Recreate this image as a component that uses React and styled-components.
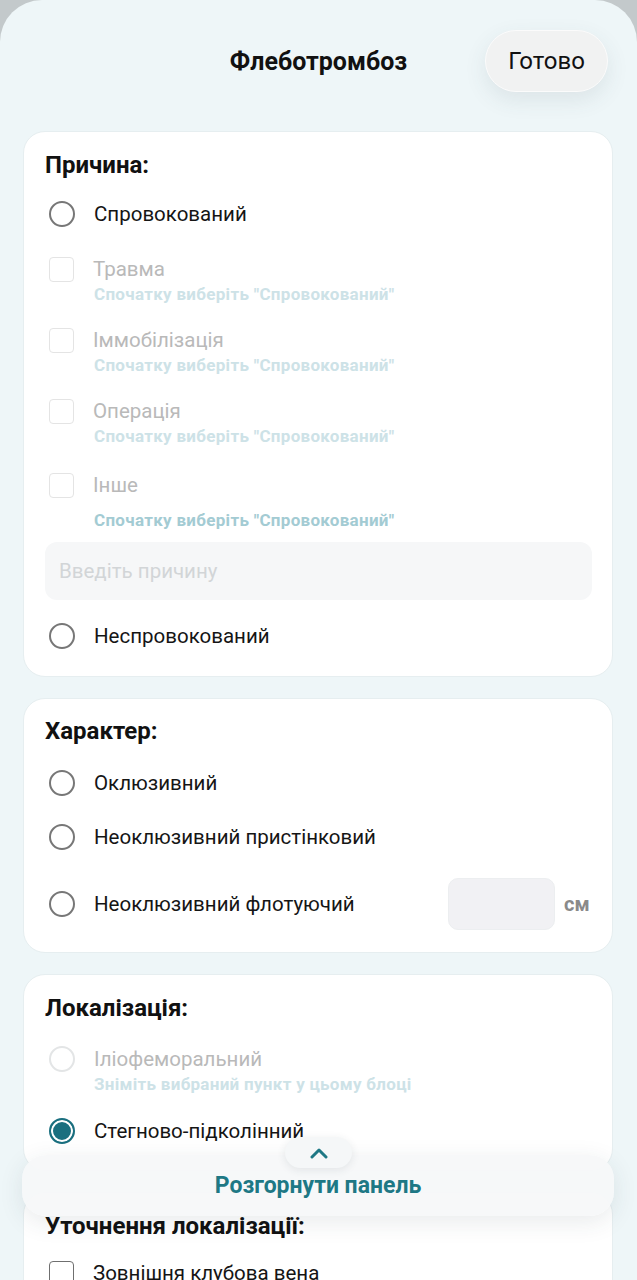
import styled, { createGlobalStyle, css } from "styled-components";

const GlobalStyle = createGlobalStyle`
  html, body {
    margin: 0;
    height: 100%;
    background: #c3c9cb;
    font-family: Roboto, "Noto Sans", sans-serif;
    -webkit-font-smoothing: antialiased;
  }
  * { box-sizing: border-box; }
`;

const Screen = styled.div`
  position: relative;
  height: 1280px;
  overflow: hidden;
`;

const Sheet = styled.div`
  height: 100%;
  background: #eef6f8;
  border-radius: 42px 42px 0 0;
`;

const Header = styled.div`
  display: grid;
  grid-template-columns: 1fr auto 1fr;
  align-items: center;
  padding: 30px 29px 0;
`;

const Title = styled.h1`
  grid-column: 2;
  margin: 0;
  font-size: 25px;
  font-weight: 700;
  color: #111;
`;

const DoneButton = styled.button`
  justify-self: end;
  width: 123px;
  height: 62px;
  border-radius: 31px;
  border: 1.5px solid #fbfbfb;
  background: #f1f2f2;
  box-shadow: 0 8px 22px rgba(60, 80, 90, 0.1);
  font-family: inherit;
  font-size: 24px;
  color: #111;
`;

const List = styled.div`
  display: flex;
  flex-direction: column;
  gap: 21px;
  padding: 39px 24px 0 23px;
`;

const Card = styled.section`
  display: flex;
  flex-direction: column;
  gap: ${(p) => p.$gap || 21}px;
  padding: ${(p) => p.$pad || "20px 20px 25px 21px"};
  background: #fff;
  border: 1px solid #e6eef0;
  border-radius: 22px;
`;

const CardTitle = styled.h2`
  margin: 0;
  font-size: 24px;
  line-height: 26px;
  font-weight: 700;
  color: #111;
`;

const Group = styled.div`
  display: flex;
  flex-direction: column;
  margin-top: ${(p) => p.$top || 0}px;
`;

const Row = styled.div`
  display: flex;
  align-items: center;
  gap: 19px;
  min-height: 30px;
  padding-left: 4px;
  margin-top: ${(p) => p.$top || 0}px;
`;

const Label = styled.span`
  flex: 1;
  font-size: 20.5px;
  color: ${(p) => (p.$disabled ? "#b9b9b9" : "#151515")};
`;

const Hint = styled.div`
  padding-left: 49px;
  margin-top: ${(p) => p.$top || 0}px;
  font-size: 17px;
  line-height: 20px;
  letter-spacing: 0.3px;
  font-weight: 700;
  color: ${(p) => (p.$strong ? "#a3cbd3" : "#cde2e7")};
`;

const markBase = css`
  flex: none;
  width: 26px;
  height: 26px;
`;

const Radio = styled.span`
  ${markBase}
  border-radius: 50%;
  border: 2px solid ${(p) => (p.$disabled ? "#e3e5e6" : "#777")};
  ${(p) =>
    p.$checked &&
    css`
      border-color: #1a6f7f;
      background: #1a6f7f;
      box-shadow: inset 0 0 0 2px #fff;
    `}
`;

const Checkbox = styled.span`
  ${markBase}
  width: 25px;
  height: 25px;
  border-radius: 4px;
  border: 1.5px solid ${(p) => (p.$disabled ? "#e4e4e4" : "#6f6f6f")};
`;

const ReasonInput = styled.div`
  display: flex;
  align-items: center;
  height: 58px;
  margin-top: -9px;
  padding-left: 14px;
  border-radius: 12px;
  background: #f6f7f8;
  font-size: 20.5px;
  color: #d2d5d7;
`;

const SizeBox = styled.div`
  width: 107px;
  height: 52px;
  border-radius: 10px;
  background: #f1f1f4;
  border: 1px solid #eceef0;
`;

const Unit = styled.span`
  width: 28px;
  font-size: 20px;
  font-weight: 700;
  color: #8a8a8a;
  margin-left: -10px;
`;

const Panel = styled.div`
  position: absolute;
  left: 22px;
  right: 23px;
  top: 1155px;
  height: 61px;
  display: flex;
  align-items: center;
  justify-content: center;
  border-radius: 24px;
  background: rgba(246, 248, 249, 0.94);
  box-shadow: 0 6px 24px rgba(40, 60, 70, 0.1);
  font-size: 23px;
  font-weight: 700;
  color: #1e7885;
`;

const PanelTab = styled.div`
  position: absolute;
  left: 285px;
  top: 1137px;
  width: 67px;
  height: 31px;
  display: flex;
  align-items: center;
  justify-content: center;
  border-radius: 16px;
  background: #f5f7f8;
  box-shadow: 0 2px 8px rgba(40, 60, 70, 0.1);
`;

const hint = 'Спочатку виберіть "Спровокований"';

const Option = ({ type = "radio", label, disabled, checked, top, children }) => (
  <Row $top={top}>
    {type === "radio" ? (
      <Radio $disabled={disabled} $checked={checked} />
    ) : (
      <Checkbox $disabled={disabled} />
    )}
    <Label $disabled={disabled}>{label}</Label>
    {children}
  </Row>
);

const App = () => {
  return (
    <Screen>
      <GlobalStyle />
      <Sheet>
        <Header>
          <Title>Флеботромбоз</Title>
          <DoneButton>Готово</DoneButton>
        </Header>
        <List>
          <Card>
            <CardTitle>Причина:</CardTitle>
            <Option label="Спровокований" />
            <Group $top={4}>
              <Option type="check" label="Травма" disabled />
              <Hint>{hint}</Hint>
            </Group>
            <Group>
              <Option type="check" label="Іммобілізація" disabled />
              <Hint>{hint}</Hint>
            </Group>
            <Group>
              <Option type="check" label="Операція" disabled />
              <Hint>{hint}</Hint>
            </Group>
            <Group $top={3}>
              <Option type="check" label="Інше" disabled />
              <Hint $top={10} $strong>
                {hint}
              </Hint>
            </Group>
            <ReasonInput>Введіть причину</ReasonInput>
            <Option label="Неспровокований" />
          </Card>

          <Card $gap={24} $pad="19px 20px 22px 21px">
            <CardTitle>Характер:</CardTitle>
            <Option label="Оклюзивний" />
            <Option label="Неоклюзивний пристінковий" />
            <Option label="Неоклюзивний флотуючий" top={2}>
              <SizeBox />
              <Unit>см</Unit>
            </Option>
          </Card>

          <Card $gap={22} $pad="20px 20px 24px 21px">
            <CardTitle>Локалізація:</CardTitle>
            <Group $top={1}>
              <Option label="Іліофеморальний" disabled />
              <Hint>Зніміть вибраний пункт у цьому блоці</Hint>
            </Group>
            <Option label="Стегново-підколінний" checked />
          </Card>

          <Card $gap={19} $pad="20px 20px 26px 21px">
            <CardTitle>Уточнення локалізації:</CardTitle>
            <Option type="check" label="Зовнішня клубова вена" />
          </Card>
        </List>
      </Sheet>

      <Panel>Розгорнути панель</Panel>
      <PanelTab>
        <svg width="20" height="12" viewBox="0 0 20 12" fill="none">
          <path
            d="M3 10 L10 3 L17 10"
            stroke="#1e7885"
            strokeWidth="3"
            strokeLinecap="round"
            strokeLinejoin="round"
          />
        </svg>
      </PanelTab>
    </Screen>
  );
};

export default App;
